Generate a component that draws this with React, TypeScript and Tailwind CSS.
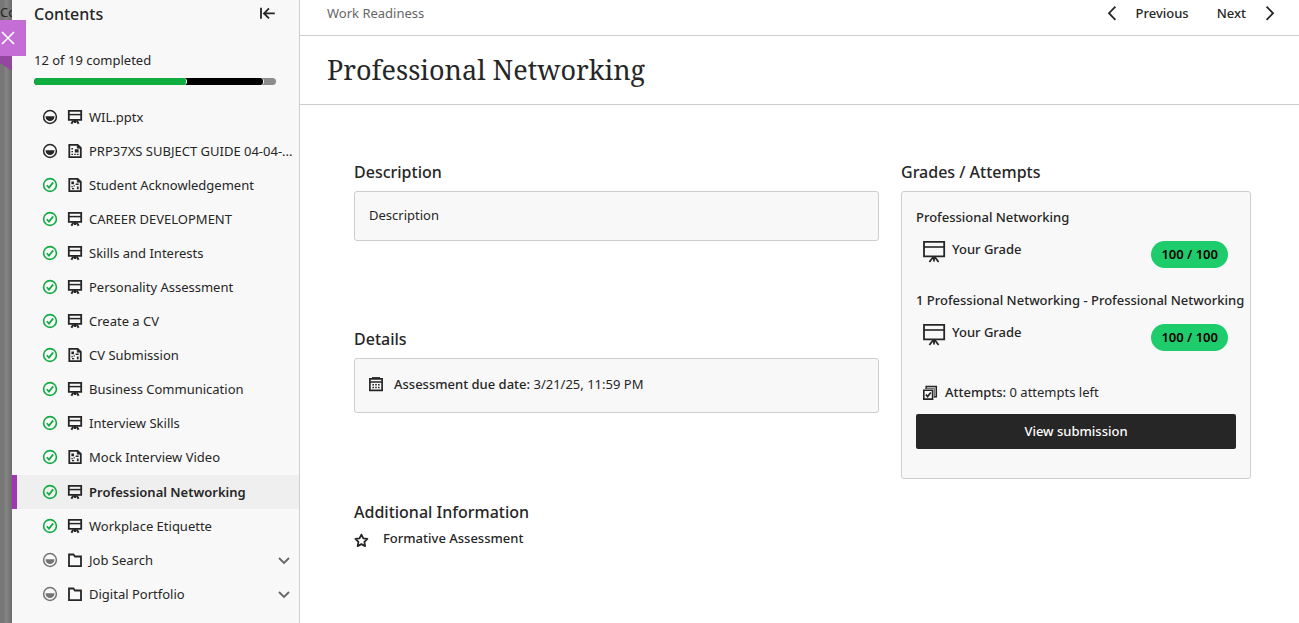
import React from "react";

type Status = "done" | "started" | "pending";
type Kind = "slides" | "file" | "test" | "folder";

interface Item {
  title: string;
  status: Status;
  kind: Kind;
  active?: boolean;
}

const items: Item[] = [
  { title: "WIL.pptx", status: "started", kind: "slides" },
  { title: "PRP37XS SUBJECT GUIDE 04-04-...", status: "started", kind: "file" },
  { title: "Student Acknowledgement", status: "done", kind: "test" },
  { title: "CAREER DEVELOPMENT", status: "done", kind: "slides" },
  { title: "Skills and Interests", status: "done", kind: "slides" },
  { title: "Personality Assessment", status: "done", kind: "slides" },
  { title: "Create a CV", status: "done", kind: "slides" },
  { title: "CV Submission", status: "done", kind: "test" },
  { title: "Business Communication", status: "done", kind: "slides" },
  { title: "Interview Skills", status: "done", kind: "slides" },
  { title: "Mock Interview Video", status: "done", kind: "test" },
  { title: "Professional Networking", status: "done", kind: "slides", active: true },
  { title: "Workplace Etiquette", status: "done", kind: "slides" },
  { title: "Job Search", status: "pending", kind: "folder" },
  { title: "Digital Portfolio", status: "pending", kind: "folder" },
];

function StatusIcon({ status }: { status: Status }) {
  if (status === "done") {
    return (
      <svg className="size-4 shrink-0 text-[#12ab44]" viewBox="0 0 16 16" fill="none" stroke="currentColor" aria-hidden="true">
        <circle cx="8" cy="8" r="6.4" strokeWidth="1.6" />
        <path d="M4.8 8.2 7 10.6 11.2 5.4" strokeWidth="1.7" />
      </svg>
    );
  }
  return (
    <svg
      className={status === "started" ? "size-4 shrink-0 text-[#262626]" : "size-4 shrink-0 text-[#747474]"}
      viewBox="0 0 16 16"
      fill="none"
      aria-hidden="true"
    >
      <circle cx="8" cy="8" r="6.4" stroke="currentColor" strokeWidth="1.5" />
      <path d="M3.6 7.2h8.8v.8a4.4 4 0 0 1-8.8 0Z" fill="currentColor" />
    </svg>
  );
}

function SlidesIcon() {
  return (
    <svg className="size-4 shrink-0" viewBox="0 0 16 16" fill="none" stroke="currentColor" aria-hidden="true">
      <path d="M1.8 1.9h12.4v8.9H1.8z" strokeWidth="1.8" />
      <path d="M2 5.6h12" strokeWidth="1.5" />
      <path d="M8 10.8v3.2M6.4 11.4l-2 3.4M9.6 11.4l2 3.4" strokeWidth="2" />
    </svg>
  );
}

function KindIcon({ kind }: { kind: Kind }) {
  if (kind === "slides") return <SlidesIcon />;
  if (kind === "folder") {
    return (
      <svg className="size-4 shrink-0" viewBox="0 0 16 16" fill="none" stroke="currentColor" strokeWidth="1.8" aria-hidden="true">
        <path d="M2 2.5h4.4l1.6 2h6v9.6H2z" />
      </svg>
    );
  }
  return (
    <svg className="size-4 shrink-0" viewBox="0 0 16 16" fill="none" stroke="currentColor" aria-hidden="true">
      <path d="M2.3 1.9h8.3L13.8 5v9.1H2.3z" strokeWidth="1.8" />
      <path d="M10.2 1.5v3.7h3.6z" fill="currentColor" strokeWidth="0.6" />
      {kind === "file" ? (
        <g fill="currentColor" stroke="none">
          <path d="M4.4 5H6v1.4H4.4zM4.4 7.9H6v1.4H4.4zM4.4 10.8H6v1.3H4.4z" />
          <path d="M7.8 6.2h3.8v3.4H7.8zM7.2 10.8h1.6v1.3H7.2zM9.9 10.8h1.7v1.3H9.9z" />
        </g>
      ) : (
        <g fill="currentColor" stroke="none">
          <path d="M4.4 4.6H7v2.6H4.4zM8.6 6.4h3v1.5h-3zM4.4 9h1.4v1.3H4.4zM6.6 8.2h1.3v1.3H6.6zM9.9 9.4h1.7v2.8H9.9zM5 10.9h2.2v1.3H5z" />
        </g>
      )}
    </svg>
  );
}

function BoardIcon() {
  return (
    <svg className="size-6 shrink-0" viewBox="0 0 24 24" fill="none" stroke="currentColor" aria-hidden="true">
      <path d="M2 1.9h20.2v14.4H2z" strokeWidth="1.8" />
      <path d="M2 7h20" strokeWidth="1.6" />
      <path d="M12 16v5.6M11 17.2 7.4 22M13 17.2l3.6 4.8" strokeWidth="1.8" />
    </svg>
  );
}

function ContentsItem({ item }: { item: Item }) {
  return (
    <li>
      <a
        href="#"
        aria-current={item.active ? "page" : undefined}
        className={
          item.active
            ? "mt-px flex h-[34px] items-center border-l-[5px] border-[#a234b5] bg-[#efefef] pr-[7px] pl-[25px] font-semibold"
            : "flex h-[34px] items-center border-l-[5px] border-transparent pr-[7px] pl-[25px]"
        }
      >
        <StatusIcon status={item.status} />
        <span className="ml-[9px] flex">
          <KindIcon kind={item.kind} />
        </span>
        <span className="ml-[6px] flex-1 whitespace-nowrap">{item.title}</span>
        {item.kind === "folder" && (
          <svg className="size-4 text-[#666]" viewBox="0 0 16 16" fill="none" stroke="currentColor" strokeWidth="1.8" aria-hidden="true">
            <path d="m3 6 5 5 5-5" />
          </svg>
        )}
      </a>
    </li>
  );
}

function SectionHeading({ children }: { children: React.ReactNode }) {
  return <h2 className="text-base leading-6 font-medium">{children}</h2>;
}

function GradeRow() {
  return (
    <div className="mt-[13px] flex items-start pr-2 pl-[6px]">
      <BoardIcon />
      <span className="ml-[6px] flex-1 leading-[18px] font-medium">Your Grade</span>
      <span className="mt-px rounded-full bg-[#1fcc6c] px-[10px] leading-[27px] font-semibold text-black">100 / 100</span>
    </div>
  );
}

export default function App() {
  return (
    <div className="relative flex min-h-screen overflow-hidden bg-white font-['Noto_Sans','Open_Sans',sans-serif] text-[13px] leading-5 text-[#262626]">
      <div className="w-3 shrink-0 overflow-hidden bg-linear-to-r from-[#777] from-30% via-[#858585] via-50% to-[#6c6c6c] leading-6 whitespace-nowrap">Co</div>
      <div className="absolute top-5 left-0 z-10">
        <button type="button" aria-label="Close" className="flex h-9 w-[26px] items-center bg-[#c46dd5] text-white">
          <svg className="size-4" viewBox="0 0 16 16" fill="none" stroke="currentColor" strokeWidth="1.7" aria-hidden="true">
            <path d="m2 2 12 12M14 2 2 14" />
          </svg>
        </button>
        <svg className="block h-[15px] w-3 text-[#94479f]" viewBox="0 0 12 15" fill="currentColor" aria-hidden="true">
          <path d="M0 0h12v15L0 7z" />
        </svg>
      </div>

      <nav aria-label="Contents" className="w-72 shrink-0 border-r border-[#cdcdcd] bg-[#f8f8f8]">
        <div className="pr-[23px] pl-[22px]">
          <div className="flex items-center justify-between pt-[2px]">
            <SectionHeading>Contents</SectionHeading>
            <button type="button" aria-label="Collapse contents">
              <svg className="size-4" viewBox="0 0 16 16" fill="none" stroke="currentColor" strokeWidth="1.8" aria-hidden="true">
                <path d="M1 1.8v11M4.2 7.4h10.6M9 2.4l-5 5 5 5" />
              </svg>
            </button>
          </div>
          <p className="mt-6">12 of 19 completed</p>
          <div className="mt-2 flex h-[7px] overflow-hidden rounded-full bg-[#8c8c8c]" role="progressbar" aria-valuenow={12} aria-valuemin={0} aria-valuemax={19} aria-label="Completed">
            <div className="w-[95%] rounded-full border-r border-[#f8f8f8] bg-black">
              <div className="h-full w-[67%] rounded-full border-r border-[#f8f8f8] bg-[#0fac40]" />
            </div>
          </div>
        </div>
        <ul className="mt-[15px]">
          {items.map((item) => (
            <ContentsItem key={item.title} item={item} />
          ))}
        </ul>
      </nav>

      <main className="min-w-0 flex-1">
        <header className="flex h-9 items-center justify-between border-b border-[#cdcdcd] pr-[21px] pb-[9px] pl-[27px]">
          <span className="text-[#666]">Work Readiness</span>
          <div className="flex gap-7 font-medium">
            <button type="button" className="flex items-center gap-4">
              <svg className="size-4" viewBox="0 0 16 16" fill="none" stroke="currentColor" strokeWidth="1.8" aria-hidden="true">
                <path d="M11.4 1.6 5 8.2l6.4 6.6" />
              </svg>
              Previous
            </button>
            <button type="button" className="flex items-center gap-4">
              Next
              <svg className="size-4" viewBox="0 0 16 16" fill="none" stroke="currentColor" strokeWidth="1.8" aria-hidden="true">
                <path d="m4.6 1.6 6.4 6.6-6.4 6.6" />
              </svg>
            </button>
          </div>
        </header>
        <div className="border-b border-[#cdcdcd] px-[27px] py-4">
          <h1 className="font-['Noto_Serif','DejaVu_Serif',serif] text-[27px] leading-9">Professional Networking</h1>
        </div>

        <div className="flex items-start gap-[22px] pt-[55px] pr-12 pl-[54px]">
          <div className="min-w-0 flex-1">
            <section>
              <SectionHeading>Description</SectionHeading>
              <p className="mt-[7px] rounded-[3px] border border-[#cdcdcd] bg-[#f8f8f8] px-[14px] pt-[13px] pb-[15px]">Description</p>
            </section>
            <section className="mt-[86px]">
              <SectionHeading>Details</SectionHeading>
              <div className="mt-[7px] flex items-center rounded-[3px] border border-[#cdcdcd] bg-[#f8f8f8] px-[13px] pt-[15px] pb-[18px]">
                <svg className="size-4" viewBox="0 0 16 16" fill="none" stroke="currentColor" aria-hidden="true">
                  <path d="M1.9 2.9h12.2v11.4H1.9z" strokeWidth="1.7" />
                  <path d="M2 6h12" strokeWidth="1.5" />
                  <path d="M4 1.9h8" strokeWidth="1.6" />
                  <path d="M4.4 8.8h1.6M7.2 8.8h1.6M10 8.8h1.6M4.4 11.6h1.6M7.2 11.6h1.6M10 11.6h1.6" strokeWidth="1.5" />
                </svg>
                <p className="ml-[10px]">
                  <span className="font-medium">Assessment due date:</span> 3/21/25, 11:59 PM
                </p>
              </div>
            </section>
            <section className="mt-[87px]">
              <SectionHeading>Additional Information</SectionHeading>
              <div className="mt-1 flex items-start">
                <svg className="mt-1 size-4" viewBox="0 0 16 16" fill="none" stroke="currentColor" strokeWidth="1.8" strokeLinejoin="round" aria-hidden="true">
                  <path d="m7.4 2.6 1.9 3.7 4.1.6-3 2.9.7 4.3-3.7-2-3.7 2 .7-4.3-3-2.9 4.1-.6z" />
                </svg>
                <p className="ml-[13px] font-medium">Formative Assessment</p>
              </div>
            </section>
          </div>

          <section className="w-[350px] shrink-0">
            <SectionHeading>Grades / Attempts</SectionHeading>
            <div className="mt-[7px] rounded-[3px] border border-[#cdcdcd] bg-[#f8f8f8] px-[14px] pt-[15px] pb-[29px]">
              <h3 className="font-medium">Professional Networking</h3>
              <GradeRow />
              <h3 className="mt-[22px] font-medium whitespace-nowrap">1 Professional Networking - Professional Networking</h3>
              <GradeRow />
              <div className="mt-[31px] flex items-center pl-[6px]">
                <svg className="size-4" viewBox="0 0 16 16" fill="none" stroke="currentColor" aria-hidden="true">
                  <path d="M1.8 6.2h8.8v8.9H1.8z" strokeWidth="1.6" />
                  <path d="M4.2 4.6V2.4h10.1v10.4h-2" strokeWidth="1.5" />
                  <path d="M3 4.4h9.4v9.4" strokeWidth="0.7" />
                  <path d="m3.9 10.4 1.7 2.2 3.2-4.2" strokeWidth="1.7" />
                </svg>
                <p className="ml-[7px]">
                  <span className="font-medium">Attempts:</span> 0 attempts left
                </p>
              </div>
              <button type="button" className="mt-3 block h-[35px] w-full rounded-[2px] bg-[#262626] pb-px font-medium text-white">
                View submission
              </button>
            </div>
          </section>
        </div>
      </main>
    </div>
  );
}
